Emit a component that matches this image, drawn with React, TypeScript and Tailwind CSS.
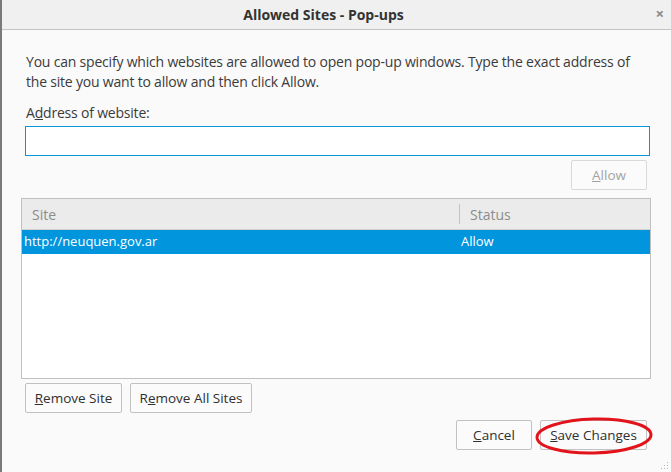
import React from 'react'

const font = { fontFamily: '"Open Sans", "Noto Sans", sans-serif' }

function Btn({ children, className = '', disabled = false }: { children: React.ReactNode; className?: string; disabled?: boolean }) {
  return (
    <button
      className={
        'h-[30px] rounded-[2px] border border-[#c1c1c1] bg-[#fbfbfb] text-[13.5px] ' +
        (disabled ? 'text-[#a3a3a3] border-[#d9d9d9]' : 'text-[#2f2f2f]') +
        ' ' +
        className
      }
    >
      {children}
    </button>
  )
}

export default function App() {
  return (
    <div
      className="relative flex h-[472px] w-[671px] flex-col overflow-hidden border-l-2 border-[#7a7a7a] bg-[#fafafa] text-[#3b3b3b]"
      style={font}
    >
      {/* Title bar */}
      <div className="relative flex h-[30px] shrink-0 items-center justify-center border-b border-[#c4c4c4] bg-[#f0f0f0] pr-[26px]">
        <span className="text-[14px] font-bold text-[#333]">Allowed Sites - Pop-ups</span>
        <span className="absolute right-[7px] top-[6px] text-[15px] font-bold leading-none text-[#8a8a8a]">×</span>
      </div>

      <div className="flex flex-col px-[19px]">
        <p className="ml-[5px] mt-[22px] text-[14px] leading-[20px] tracking-[-0.2px]">
          You can specify which websites are allowed to open pop-up windows. Type the exact address of the site you want
          to allow and then click Allow.
        </p>
        <label className="ml-[5px] mt-[11px] text-[14px] leading-[20px] tracking-[-0.2px]">
          A<span className="underline">d</span>dress of website:
        </label>
        <input className="ml-[4px] mt-[3px] h-[30px] w-[625px] border border-[#0996d9] bg-white outline-none" />
        <div className="mt-[4px] flex justify-end pr-[5px]">
          <Btn disabled className="w-[76px]">
            <span className="underline">A</span>llow
          </Btn>
        </div>

        {/* Site list */}
        <div className="mt-[8px] flex h-[181px] w-[630px] flex-col border border-[#c0c0c0] bg-white">
          <div className="flex h-[31px] shrink-0 items-center border-b border-[#d0d0d0] bg-[#ebebeb] text-[14px] text-[#8c8c8c]">
            <div className="w-[437px] pl-[10px]">Site</div>
            <div className="h-[20px] w-px bg-[#c4c4c4]" />
            <div className="pl-[10px]">Status</div>
          </div>
          <div className="flex h-[24px] items-center bg-[#0095dd] text-[13px] text-white">
            <div className="w-[439px] pl-[2px]">http://neuquen.gov.ar</div>
            <div>Allow</div>
          </div>
        </div>

        <div className="ml-[4px] mt-[4px] flex gap-[8px]">
          <Btn className="w-[97px]">
            <span className="underline">R</span>emove Site
          </Btn>
          <Btn className="w-[122px]">
            R<span className="underline">e</span>move All Sites
          </Btn>
        </div>

        <div className="mt-[7px] flex justify-end gap-[8px] pr-[5px]">
          <Btn className="w-[76px]">
            <span className="underline">C</span>ancel
          </Btn>
          <Btn className="w-[107px]">
            <span className="underline">S</span>ave Changes
          </Btn>
        </div>
      </div>

      {/* Red highlight around Save Changes */}
      <svg className="absolute left-[532px] top-[415px]" width="122" height="42" viewBox="0 0 122 42">
        <ellipse cx="60" cy="21" rx="57" ry="17" fill="none" stroke="#e3131b" strokeWidth="3" transform="rotate(-1.5 60 21)" />
      </svg>

      {/* Resize grip */}
      <svg className="absolute bottom-[2px] right-[2px]" width="10" height="10" viewBox="0 0 10 10">
        {[
          [8, 2],
          [5, 5],
          [8, 5],
          [2, 8],
          [5, 8],
          [8, 8],
        ].map(([x, y]) => (
          <rect key={`${x}-${y}`} x={x} y={y} width="1" height="1" fill="#b5b5b5" />
        ))}
      </svg>
    </div>
  )
}
